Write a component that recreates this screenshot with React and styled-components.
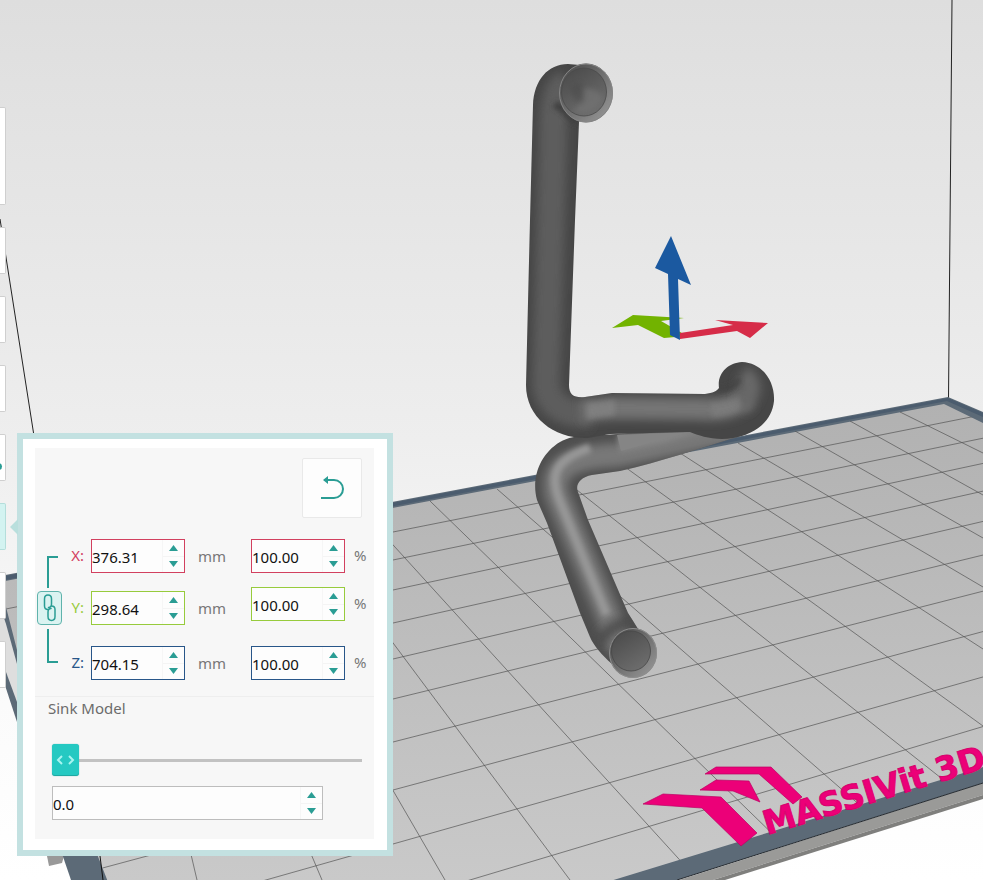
import React, { useState } from "react";
import styled, { createGlobalStyle } from "styled-components";

const GlobalStyle = createGlobalStyle`
  * { box-sizing: border-box; }
  body { margin: 0; font-family: "Noto Sans", "Open Sans", sans-serif; font-size: 15px; }
`;

const teal = "#2a9d94";

const Workspace = styled.main`
  position: relative;
  min-height: 100vh;
  overflow: hidden;
  background: #fff;
`;

const Viewport = styled.svg`
  position: absolute;
  inset: 0;
  width: 100%;
  height: 100%;
  display: block;
`;

const ToolRail = styled.nav`
  position: absolute;
  left: 0;
  top: 107px;
  display: flex;
  flex-direction: column;
  gap: 22px;
`;

const ToolTab = styled.button`
  width: 6px;
  height: ${(p) => (p.$tall ? 98 : 47)}px;
  padding: 0;
  overflow: hidden;
  display: flex;
  align-items: center;
  border: 1px solid ${(p) => (p.$active ? "#b4dedb" : "#cfcfcf")};
  border-left: 0;
  border-radius: 0 2px 2px 0;
  background: ${(p) => (p.$active ? "#d3f3f1" : "#fff")};
`;

const TabDot = styled.span`
  flex: none;
  width: 7px;
  height: 7px;
  margin: 17px 0 0 -5px;
  border-radius: 50%;
  background: ${teal};
`;

const Panel = styled.section`
  position: absolute;
  left: 17px;
  top: 433px;
  width: 376px;
  padding: 9px 13px 11px 12px;
  border: 6px solid #c3e1e1;
  background: #fff;

  &::before {
    content: "";
    position: absolute;
    left: -13px;
    top: 80px;
    border: 8px solid transparent;
    border-left-width: 0;
    border-right: 8px solid #b9dfdd;
  }
`;

const PanelBody = styled.div`
  background: #f7f7f7;
`;

const ScaleSection = styled.div`
  padding: 10px 6px 16px 2px;
  border-bottom: 1px solid #eee;
`;

const ResetButton = styled.button`
  display: flex;
  align-items: center;
  justify-content: center;
  width: 60px;
  height: 60px;
  margin: 0 6px 0 auto;
  padding: 0;
  border: 1px solid #e9e9e9;
  border-radius: 2px;
  background: #fdfdfd;
`;

const Axes = styled.div`
  display: flex;
  padding-top: 21px;
`;

const LinkColumn = styled.div`
  display: flex;
  flex-direction: column;
  flex: none;
  width: 26px;
  padding-top: 17px;
`;

const Bracket = styled.span`
  width: 11px;
  height: ${(p) => (p.$end ? 34 : 32)}px;
  margin-left: 10px;
  border-left: 2px solid ${teal};
  ${(p) => (p.$end ? "border-bottom" : "border-top")}: 2px solid ${teal};
`;

const LinkButton = styled.button`
  display: flex;
  align-items: center;
  justify-content: center;
  width: 25px;
  height: 34px;
  margin: 3px 0 4px;
  padding: 0;
  border: 1px solid #5fb3ac;
  border-radius: 4px;
  background: #dbf3f1;
`;

const Column = styled.div`
  display: grid;
  grid-template-rows: ${(p) => (p.$percent ? "48px 59px 34px" : "52px 55px 34px")};
  margin-left: ${(p) => (p.$percent ? 28 : 4)}px;
`;

const FieldRow = styled.div`
  display: flex;
  align-items: center;
  height: 34px;
`;

const AxisLabel = styled.label`
  flex: none;
  width: 24px;
  padding: 0 7px 2px 0;
  text-align: right;
  white-space: nowrap;
  color: ${(p) => p.$color};
`;

const Unit = styled.span`
  flex: none;
  width: ${(p) => (p.$percent ? 24 : 38)}px;
  padding: 0 0 ${(p) => (p.$percent ? 2 : 0)}px ${(p) => (p.$percent ? 9 : 13)}px;
  color: #777;
`;

const SpinBox = styled.div`
  display: flex;
  flex: none;
  width: ${(p) => (p.$wide ? 271 : 94)}px;
  height: 34px;
  border: 1px solid ${(p) => p.$color};
  background: #fdfdfd;
`;

const SpinInput = styled.input`
  flex: 1;
  min-width: 0;
  padding: 1px 0 0;
  border: 0;
  outline: 0;
  background: transparent;
  font: inherit;
  color: #111;
`;

const Steppers = styled.div`
  display: flex;
  flex-direction: column;
  width: 22px;
  border-left: 1px solid #f6f6f6;
`;

const Step = styled.button`
  flex: 1;
  display: flex;
  align-items: center;
  justify-content: center;
  padding: 0 1px 0 0;
  border: 0;
  background: transparent;

  & + & {
    border-top: 1px solid #f4f4f4;
  }
`;

const SinkSection = styled.div`
  padding: 0 12px 19px 17px;
`;

const SinkLabel = styled.label`
  display: block;
  height: 47px;
  margin-left: -4px;
  line-height: 22px;
  color: #6b6b6b;
`;

const thumbArrows =
  "url(\"data:image/svg+xml,%3Csvg xmlns='http://www.w3.org/2000/svg' width='27' height='32' fill='none' stroke='%23a9f5f0' stroke-width='2'%3E%3Cpath d='M10 12l-4 4 4 4M17 12l4 4-4 4'/%3E%3C/svg%3E\")";

const Slider = styled.input`
  appearance: none;
  display: block;
  width: 100%;
  height: 32px;
  margin: 0 0 10px;
  background: linear-gradient(#c2c2c2, #c2c2c2) center / 100% 3px no-repeat;

  &::-webkit-slider-thumb {
    appearance: none;
    width: 27px;
    height: 32px;
    border: 0;
    border-radius: 3px;
    background: ${thumbArrows} center no-repeat #25c9c2;
    box-shadow: inset 0 -1px 0 #1fa9a3, 0 0 1px #3aa;
  }
`;

function Spinner({ id, label, color, initial, wide }) {
  const [value, setValue] = useState(initial);
  const digits = initial.split(".")[1].length;
  const step = (by) => setValue((v) => ((parseFloat(v) || 0) + by).toFixed(digits));
  return (
    <SpinBox $color={color} $wide={wide}>
      <SpinInput id={id} aria-label={label} value={value} onChange={(e) => setValue(e.target.value)} />
      <Steppers>
        <Step type="button" aria-label={`Increase ${label}`} onClick={() => step(1)}>
          <svg width="9" height="6"><path d="M4.500 0L9 6H0z" fill={teal} /></svg>
        </Step>
        <Step type="button" aria-label={`Decrease ${label}`} onClick={() => step(-1)}>
          <svg width="9" height="6"><path d="M0 0H9L4.500 6z" fill={teal} /></svg>
        </Step>
      </Steppers>
    </SpinBox>
  );
}

const axes = [
  { axis: "X", color: "#d2405f", size: "376.31" },
  { axis: "Y", color: "#97cb3c", size: "298.64" },
  { axis: "Z", color: "#285689", size: "704.15" },
];

/* Plate grid: [x1, y1, x2, y2] */
const acrossLines = [532, 560, 590, 623, 659, 699, 742, 790, 844, 903].map((y) => {
  const slope = 0.1989 + 0.00027 * (y - 532);
  return [0, y + 393 * slope, 983, y - 590 * slope];
});
const depthLines = [
  [120, 552, 197, 880],
  [180, 543, 322, 880],
  [243, 532, 445, 880],
  [302, 521, 570, 880],
  [364, 513, 698, 880],
  [430, 501, 785, 846],
  [497, 489, 870, 814],
  [558, 475, 960, 793],
  [625, 467, 983, 726],
  [680, 453, 983, 649],
  [738, 443, 983, 587],
  [795, 431, 983, 538],
  [850, 421, 983, 495],
  [900, 412, 983, 453],
];

const upper =
  "M533 105C534 80 548 64 568 64L592 66 579 122 575 220 569 385C569 395 574 398 585 397L612 393 705 394C713 393 717 391 719 388C717 373 728 363 742 362C763 363 775 382 774 401C772 421 756 434 733 438C715 441 700 436 690 432L610 434 588 438C555 439 526 418 526 385L530 220Z";
const lower =
  "M747 434C700 448 660 462 620 471L592 475C580 477 575 485 578 492L588 520 628 613 640 632 612 664C602 655 594 646 590 637L580 613 547 523 537 500C531 478 540 454 560 442C575 433 600 436 617 434L720 425Z";

function Scene() {
  return (
    <Viewport viewBox="0 0 983 880" preserveAspectRatio="xMidYMid slice" role="img" aria-label="Pipe model on build plate">
      <defs>
        <linearGradient id="backdrop" x2="0" y2="1">
          <stop offset="0" stopColor="#dedede" />
          <stop offset=".5" stopColor="#eeeeee" />
          <stop offset=".8" stopColor="#fbfbfb" />
          <stop offset="1" stopColor="#ffffff" />
        </linearGradient>
        <linearGradient id="plate" gradientUnits="userSpaceOnUse" x1="0" y1="400" x2="0" y2="880">
          <stop offset="0" stopColor="#b1b1b1" />
          <stop offset="1" stopColor="#c9c9c9" />
        </linearGradient>
        <linearGradient id="cavity" x2=".6" y2="1">
          <stop offset="0" stopColor="#484848" />
          <stop offset="1" stopColor="#6c6c6c" />
        </linearGradient>
        <linearGradient id="flange" x2="1" y2="1">
          <stop offset=".2" stopColor="#555555" />
          <stop offset="1" stopColor="#9c9c9c" />
        </linearGradient>
        <filter id="soft" filterUnits="userSpaceOnUse" x="480" y="30" width="340" height="680"><feGaussianBlur stdDeviation="5" /></filter>
        <filter id="fine" filterUnits="userSpaceOnUse" x="480" y="30" width="340" height="680"><feGaussianBlur stdDeviation="2.500" /></filter>
        <clipPath id="upperClip"><path d={upper} /></clipPath>
        <clipPath id="lowerClip"><path d={lower} /></clipPath>
        <clipPath id="plateClip"><path d="M0 581L944 403 983 423V767L607 882H108L6 607Z" /></clipPath>
      </defs>

      <rect width="983" height="880" fill="url(#backdrop)" />
      <path d="M0 219L34 436M952 0L948.500 399" stroke="#222" fill="none" />

      <path d="M47 856H64L62 863 49 866Z" fill="#999" />
      <path d="M607 903L983 783V795L713 880Z" fill="#9a9a98" />
      <path d="M713 880L983 795V799L725 880Z" fill="#7f7f7d" />
      <path d="M0 576L948 397 983 412V783L677 880H71L17 722 0 670Z" fill="#5c6a77" />
      <path d="M0 577L948 398 983 413V417L947 401 0 581Z" fill="#4b5c6e" />
      <path d="M677 880L983 783" stroke="#262b30" fill="none" />
      <path d="M0 582L944 404 983 423V767L607 882H108L17 650 6 607 0 590Z" fill="url(#plate)" />
      <path d="M0 606L6 624 17 664V702L6 672 0 655Z" fill="#dedede" />
      <g clipPath="url(#plateClip)" stroke="#555" strokeWidth=".7">
        {[...acrossLines, ...depthLines].map(([x1, y1, x2, y2]) => (
          <line key={`${x1}-${y1}`} x1={x1} y1={y1} x2={x2} y2={y2} />
        ))}
      </g>
      <path d="M100 856L103 880" stroke="#111" />

      {/* lower run */}
      <path d={lower} fill="#4e4e4e" />
      <g clipPath="url(#lowerClip)" fill="none">
        <path d="M740 430L617 455C570 457 550 467 557 495L612 625 620 650" stroke="#787878" strokeWidth="24" filter="url(#soft)" />
        <path d="M590 448C554 460 550 475 559 499L607 615" stroke="#979797" strokeWidth="9" filter="url(#fine)" />
        <path d="M617 435L620 452 665 443 705 432 690 430Z" fill="#858585" filter="url(#fine)" />
        <path d="M617 435L621 451 660 440 690 432Z" fill="#858585" />
        <path d="M598 642Q617 620 634 622" stroke="#4c4c4c" strokeWidth="11" filter="url(#soft)" />
      </g>
      {/* upright, horizontal run and end elbow */}
      <path d={upper} fill="#464646" />
      <g clipPath="url(#upperClip)" fill="none">
        <path d="M567 83C552 90 553 120 553 150L546 385Q550 415 590 414" stroke="#5d5d5d" strokeWidth="27" filter="url(#soft)" />
        <path d="M582 411L612 408 700 409Q730 412 747 397" stroke="#757575" strokeWidth="22" filter="url(#soft)" />
        <path d="M740 405Q760 388 742 374" stroke="#676767" strokeWidth="20" filter="url(#soft)" />
        <path d="M587 404L615 400V415L587 419Z" fill="#848484" opacity=".7" filter="url(#fine)" />
        <path d="M710 403Q728 403 740 397V410Q725 417 712 417Z" fill="#808080" opacity=".6" filter="url(#fine)" />
        <path d="M719 390Q732 390 740 379" stroke="#424242" strokeWidth="4" filter="url(#fine)" />
        <path d="M555 104L564 110 577 122" stroke="#404040" strokeWidth="8" filter="url(#fine)" />
      </g>
      <g>
        <ellipse cx="586" cy="93" rx="27" ry="29.500" fill="url(#flange)" />
        <ellipse cx="584" cy="92" rx="22.500" ry="24" fill="url(#cavity)" />
        <path d="M572 112Q584 104 584 88Q598 88 603 98Q592 117 572 112Z" fill="#767676" filter="url(#fine)" opacity=".6" />
        <path d="M570 88Q575 105 584 102Q584 90 580 82Z" fill="#3f3f3f" filter="url(#fine)" opacity=".3" />
        <ellipse cx="584" cy="92" rx="22.500" ry="24" fill="none" stroke="#4a4a4a" strokeWidth=".8" />
        <ellipse cx="586" cy="93" rx="26.500" ry="29" fill="none" stroke="#858585" />
      </g>
      <g>
        <ellipse cx="633" cy="653" rx="24" ry="25" fill="url(#flange)" />
        <ellipse cx="631" cy="651" rx="19.500" ry="20" fill="url(#cavity)" />
        <ellipse cx="631" cy="651" rx="19.500" ry="20" fill="none" stroke="#484848" strokeWidth=".8" />
        <ellipse cx="633" cy="653" rx="23.500" ry="24.500" fill="none" stroke="#8d8d8d" />
      </g>

      {/* move gizmo */}
      <path d="M612 328L633 315 684 318 661 321 687 336 664 338 638 325Z" fill="#72b300" />
      <path d="M680 333L733 325 715 320 768 323 750 338 737 331 680 339Z" fill="#d62c48" />
      <path d="M671 236L691 285 678 279 680 340 670 335 668 274 655 268Z" fill="#1b59a0" />

      {/* brand mark */}
      <g fill="#ec0078" stroke="#bd0063" strokeWidth=".7">
        <path d="M643 804L663 794 721 797 757 833 741 846 702 808Z" />
        <path d="M700 790L716 780 749 781 760 802 733 791Z" />
        <path d="M705 774L716 767 771 767 802 797 793 804 759 774Z" />
      </g>
      <text x="767" y="835" transform="rotate(-17 767 835)" fontFamily="DejaVu Sans, sans-serif" fontWeight="700" fontSize="33" fill="#ec0078" stroke="#d8006e" strokeWidth="1">
        MASSIVit 3D
      </text>
    </Viewport>
  );
}

export default function App() {
  const [sink, setSink] = useState(0);
  return (
    <Workspace>
      <GlobalStyle />
      <Scene />
      <ToolRail aria-label="Tools">
        <ToolTab $tall aria-label="View" />
        <ToolTab aria-label="Open" />
        <ToolTab aria-label="Move" />
        <ToolTab aria-label="Rotate" />
        <ToolTab aria-label="Mirror"><TabDot /></ToolTab>
        <ToolTab $active aria-label="Scale" />
        <ToolTab aria-label="Slice" />
        <ToolTab aria-label="Settings" />
      </ToolRail>
      <Panel aria-label="Scale">
        <PanelBody>
          <ScaleSection>
            <ResetButton type="button" aria-label="Reset">
              <svg width="26" height="26" viewBox="0 0 26 26" fill="none" stroke={teal} strokeWidth="2">
                <path d="M5 5H15a9 9 0 0 1 0 18H2" />
                <path d="M9 1V9L4 5Z" fill={teal} stroke="none" />
              </svg>
            </ResetButton>
            <Axes>
              <LinkColumn>
                <Bracket />
                <LinkButton type="button" aria-label="Link axes" aria-pressed="true">
                  <svg width="14" height="28" viewBox="0 0 14 28" fill="none" stroke={teal} strokeWidth="1.500" strokeLinecap="round">
                    <path d="M5 15.500C2.500 15.500 1.500 14 1.500 12V5C1.500 -.2 8.500 -.2 8.500 5V10C8.500 12 7.500 13.500 5.500 13.500" />
                    <path d="M8.500 12C11 12 12 13.500 12 15.500V22.500C12 27.700 5 27.700 5 22.500V18C5 16 6 14.500 8 14.500" />
                  </svg>
                </LinkButton>
                <Bracket $end />
              </LinkColumn>
              <Column>
                {axes.map(({ axis, color, size }) => (
                  <FieldRow key={axis}>
                    <AxisLabel htmlFor={`size-${axis}`} $color={color}>{axis}:</AxisLabel>
                    <Spinner id={`size-${axis}`} label={`${axis} size`} color={color} initial={size} />
                    <Unit>mm</Unit>
                  </FieldRow>
                ))}
              </Column>
              <Column $percent>
                {axes.map(({ axis, color }) => (
                  <FieldRow key={axis}>
                    <Spinner id={`percent-${axis}`} label={`${axis} percent`} color={color} initial="100.00" />
                    <Unit $percent>%</Unit>
                  </FieldRow>
                ))}
              </Column>
            </Axes>
          </ScaleSection>
          <SinkSection>
            <SinkLabel htmlFor="sink">Sink Model</SinkLabel>
            <Slider id="sink" type="range" min="0" max="100" value={sink} onChange={(e) => setSink(e.target.value)} />
            <Spinner id="sink-value" label="Sink depth" color="#bdbdbd" initial="0.0" wide />
          </SinkSection>
        </PanelBody>
      </Panel>
    </Workspace>
  );
}
